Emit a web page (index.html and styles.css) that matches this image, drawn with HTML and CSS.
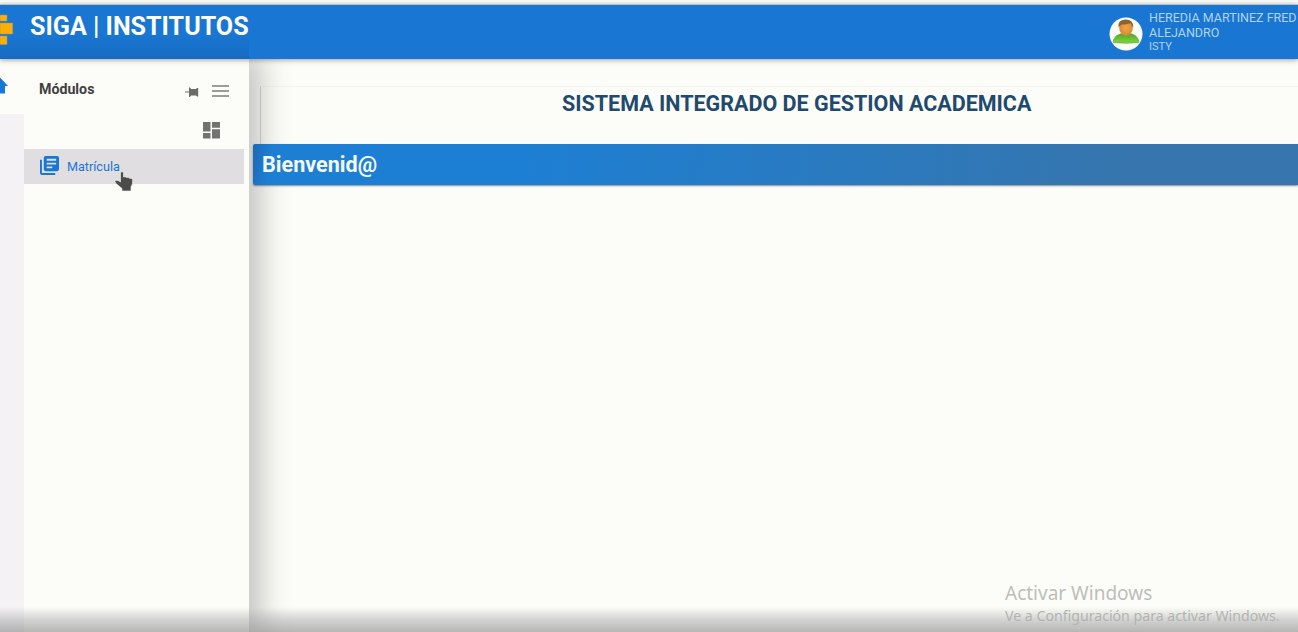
FILE: index.html
```html
<!DOCTYPE html>
<html lang="es">
<head>
<meta charset="utf-8">
<title>SIGA | INSTITUTOS</title>
<link rel="stylesheet" href="styles.css">
</head>
<body>
<div class="app">
  <header class="topbar">
    <svg class="logo" viewBox="0 0 14 32"><path d="M0 1h7v6H0zM0 9h12.700v11H0zM0 22h7v8.500H0z" fill="#ffae08" stroke="#8f9b78" stroke-width=".5"/></svg>
    <h1 class="brand">SIGA | INSTITUTOS</h1>
    <div class="user">
      <svg class="avatar" viewBox="0 0 34 34">
        <defs>
          <linearGradient id="shirt" x2="0" y2="1"><stop stop-color="#55a82c"/><stop offset="1" stop-color="#7ed83e"/></linearGradient>
          <radialGradient id="face"><stop stop-color="#f2a64a"/><stop offset="1" stop-color="#d98a32"/></radialGradient>
        </defs>
        <circle cx="17" cy="17" r="16.500" fill="#fcfdf8"/>
        <path d="M4.200 25.500Q4 19.500 11.500 16.800h11Q30 19.500 29.800 25.500 17 27 4.200 25.500z" fill="url(#shirt)" stroke="#58a435" stroke-width=".6"/>
        <ellipse cx="17" cy="11" rx="6.800" ry="7.500" fill="url(#face)"/>
        <path d="M9.500 10.500Q8.500 3 16 2.600q8.500-.4 8.400 8-1.800-1.600-2.600-4.300Q16 8 13 7.200q-2 1.200-3.500 3.300z" fill="#8b6233"/>
      </svg>
      <div class="user-text"><span>HEREDIA MARTINEZ FRED</span><span>ALEJANDRO</span><span class="org">ISTY</span></div>
    </div>
  </header>
  <div class="body">
    <nav class="rail">
      <div class="rail-home"><svg class="home" viewBox="0 0 8 18"><path d="M0 .5 8 9H5v7.500H0z" fill="#1976d2"/></svg></div>
    </nav>
    <aside class="sidebar">
      <div class="side-head">
        <h2 class="side-title">Módulos</h2>
        <svg class="pin" viewBox="0 0 14 12"><path d="M0 5.500h4V1.500h1l1 1.500h5l1-1h1.200v8.500H12l-1-1H6l-1 1.500H4V6.500H0z" fill="#6b6b69"/></svg>
        <svg class="menu" viewBox="0 0 17 12"><path d="M0 1h17M0 6h17M0 11h17" stroke="#7c7c7a" stroke-width="1.700"/></svg>
      </div>
      <div class="side-tools">
        <svg class="dash" viewBox="0 0 17 17"><path d="M0 0h7.500v9.500H0zM9 0h8v5.800H9zM0 11h7.500v5.500H0zM9 7.300h8v9.200H9z" fill="#727270"/></svg>
      </div>
      <a class="item">
        <svg class="books" viewBox="2 2 20 20"><path d="M4 6H2v14c0 1.100.9 2 2 2h14v-2H4V6zm16-4H8c-1.100 0-2 .9-2 2v12c0 1.100.9 2 2 2h12c1.100 0 2-.9 2-2V4c0-1.100-.9-2-2-2zm-1 9H9V9h10v2zm-4 4H9v-2h6v2zm4-8H9V5h10v2z" fill="#1976d2"/></svg>
        <span>Matrícula</span>
      </a>
    </aside>
    <main class="main">
      <section class="card">
        <h2 class="heading">SISTEMA INTEGRADO DE GESTION ACADEMICA</h2>
      </section>
      <div class="banner">Bienvenid@</div>
    </main>
  </div>
  <div class="fade"></div>
  <div class="watermark"><div class="wm-title">Activar Windows</div><div class="wm-text">Ve a Configuración para activar Windows.</div></div>
  <svg class="cursor" viewBox="0 0 20 22"><path d="M6.500 2.500Q8 1 9.500 2.500V7q2-.8 3 .5 2-.7 3 .8 2.500-.5 3.200 1.500.3 4-1.700 7.200V21H8v-2.500L1.500 13q-1.200-2 .5-2.800 2-.2 4.500 1.700z" fill="#4b4b49" stroke="#f5f5f2" stroke-width=".6"/></svg>
</div>
</body>
</html>
```
FILE: styles.css
```css
* { box-sizing: border-box; }
body { margin: 0; font-family: Roboto, "Liberation Sans", sans-serif; background: #fcfdf8; }
h1, h2 { margin: 0; font-weight: 700; white-space: nowrap; }
svg { display: block; flex: none; }
.app { position: relative; width: 1298px; height: 632px; padding-top: 4px; overflow: hidden; display: flex; flex-direction: column; }
.topbar { position: relative; z-index: 3; height: 55px; flex: none; display: flex; align-items: flex-start; background: linear-gradient(rgba(20,80,150,0), rgba(20,80,150,.3)) 0 100% / 249px 24px no-repeat, #1976d2; border-top: 1px solid #b7c5cb; box-shadow: 0 1px 5px rgba(60,60,70,.5); }
.logo { width: 14px; height: 32px; margin-top: 9px; }
.brand { margin: 7px 0 0 16px; font-size: 25.1px; line-height: 30px; color: #fcfdf8; }
.user { display: flex; margin-left: auto; width: 189px; }
.avatar { width: 34px; height: 34px; margin-top: 12px; }
.user-text { display: flex; flex-direction: column; margin: 5px 0 0 6px; font-size: 12.5px; line-height: 15px; color: #b1d4f1; white-space: nowrap; }
.org { font-size: 11px; line-height: 13px; }
.body { flex: 1; display: flex; }
.rail { width: 24px; background: #f4f2f4; }
.rail-home { height: 55px; padding-top: 18px; background: #fcfdf8; }
.home { width: 8px; height: 18px; }
.sidebar { position: relative; z-index: 2; width: 225px; background: #fcfdf8; box-shadow: 10px 0 26px 4px rgba(80,80,85,.3); clip-path: inset(0 -60px 0 0); }
.side-head { display: flex; align-items: center; height: 60px; padding: 0 20px 0 15px; }
.side-title { flex: 1; font-size: 14.2px; line-height: 18px; color: #40403f; }
.pin { width: 14px; height: 12px; margin: 5px 13px 0 0; }
.menu { width: 17px; height: 12px; margin-top: 4px; }
.side-tools { height: 30px; display: flex; justify-content: flex-end; padding: 3px 29px 0 0; }
.dash { width: 17px; height: 17px; }
.item { display: flex; align-items: center; width: 220px; height: 35px; padding-left: 16px; gap: 8px; background: #e0dee0; color: #1976d2; font-size: 12.6px; }
.books { width: 19px; height: 19px; margin-top: -2px; }
.main { flex: 1; min-width: 0; padding-top: 27px; }
.card { height: 58px; margin-left: 11px; padding: 4px 0 0 301px; border-top: 1px solid #f2f3ee; border-left: 1px solid #d5d5d2; }
.heading { font-size: 21.5px; line-height: 25px; color: #1f4a6e; }
.banner { position: relative; z-index: 2; height: 41px; margin-left: 4px; padding-left: 9px; border-radius: 2px 0 0 2px; background: linear-gradient(100deg, #1d68b4, #1d7fd3 20px, #1d7fd3 270px, #3675ad 84%, #3675ad); box-shadow: 0 1px 2px rgba(50,60,75,.6); color: #f4f8f6; font-size: 21.6px; line-height: 41px; font-weight: 700; }
.fade { position: absolute; z-index: 4; left: 0; right: 0; bottom: 0; height: 25px; background: linear-gradient(rgba(145,145,150,0), rgba(145,145,150,.38) 50%, rgba(135,135,135,.6)); }
.watermark { position: absolute; z-index: 5; left: 1005px; top: 580px; font-family: "Noto Sans", sans-serif; white-space: nowrap; color: #bdbeba; }
.wm-title { font-size: 19px; line-height: 26px; }
.wm-text { font-size: 14.15px; line-height: 19px; color: #b2b3b1; }
.cursor { position: absolute; z-index: 5; left: 114px; top: 170px; width: 20px; height: 22px; }
```
